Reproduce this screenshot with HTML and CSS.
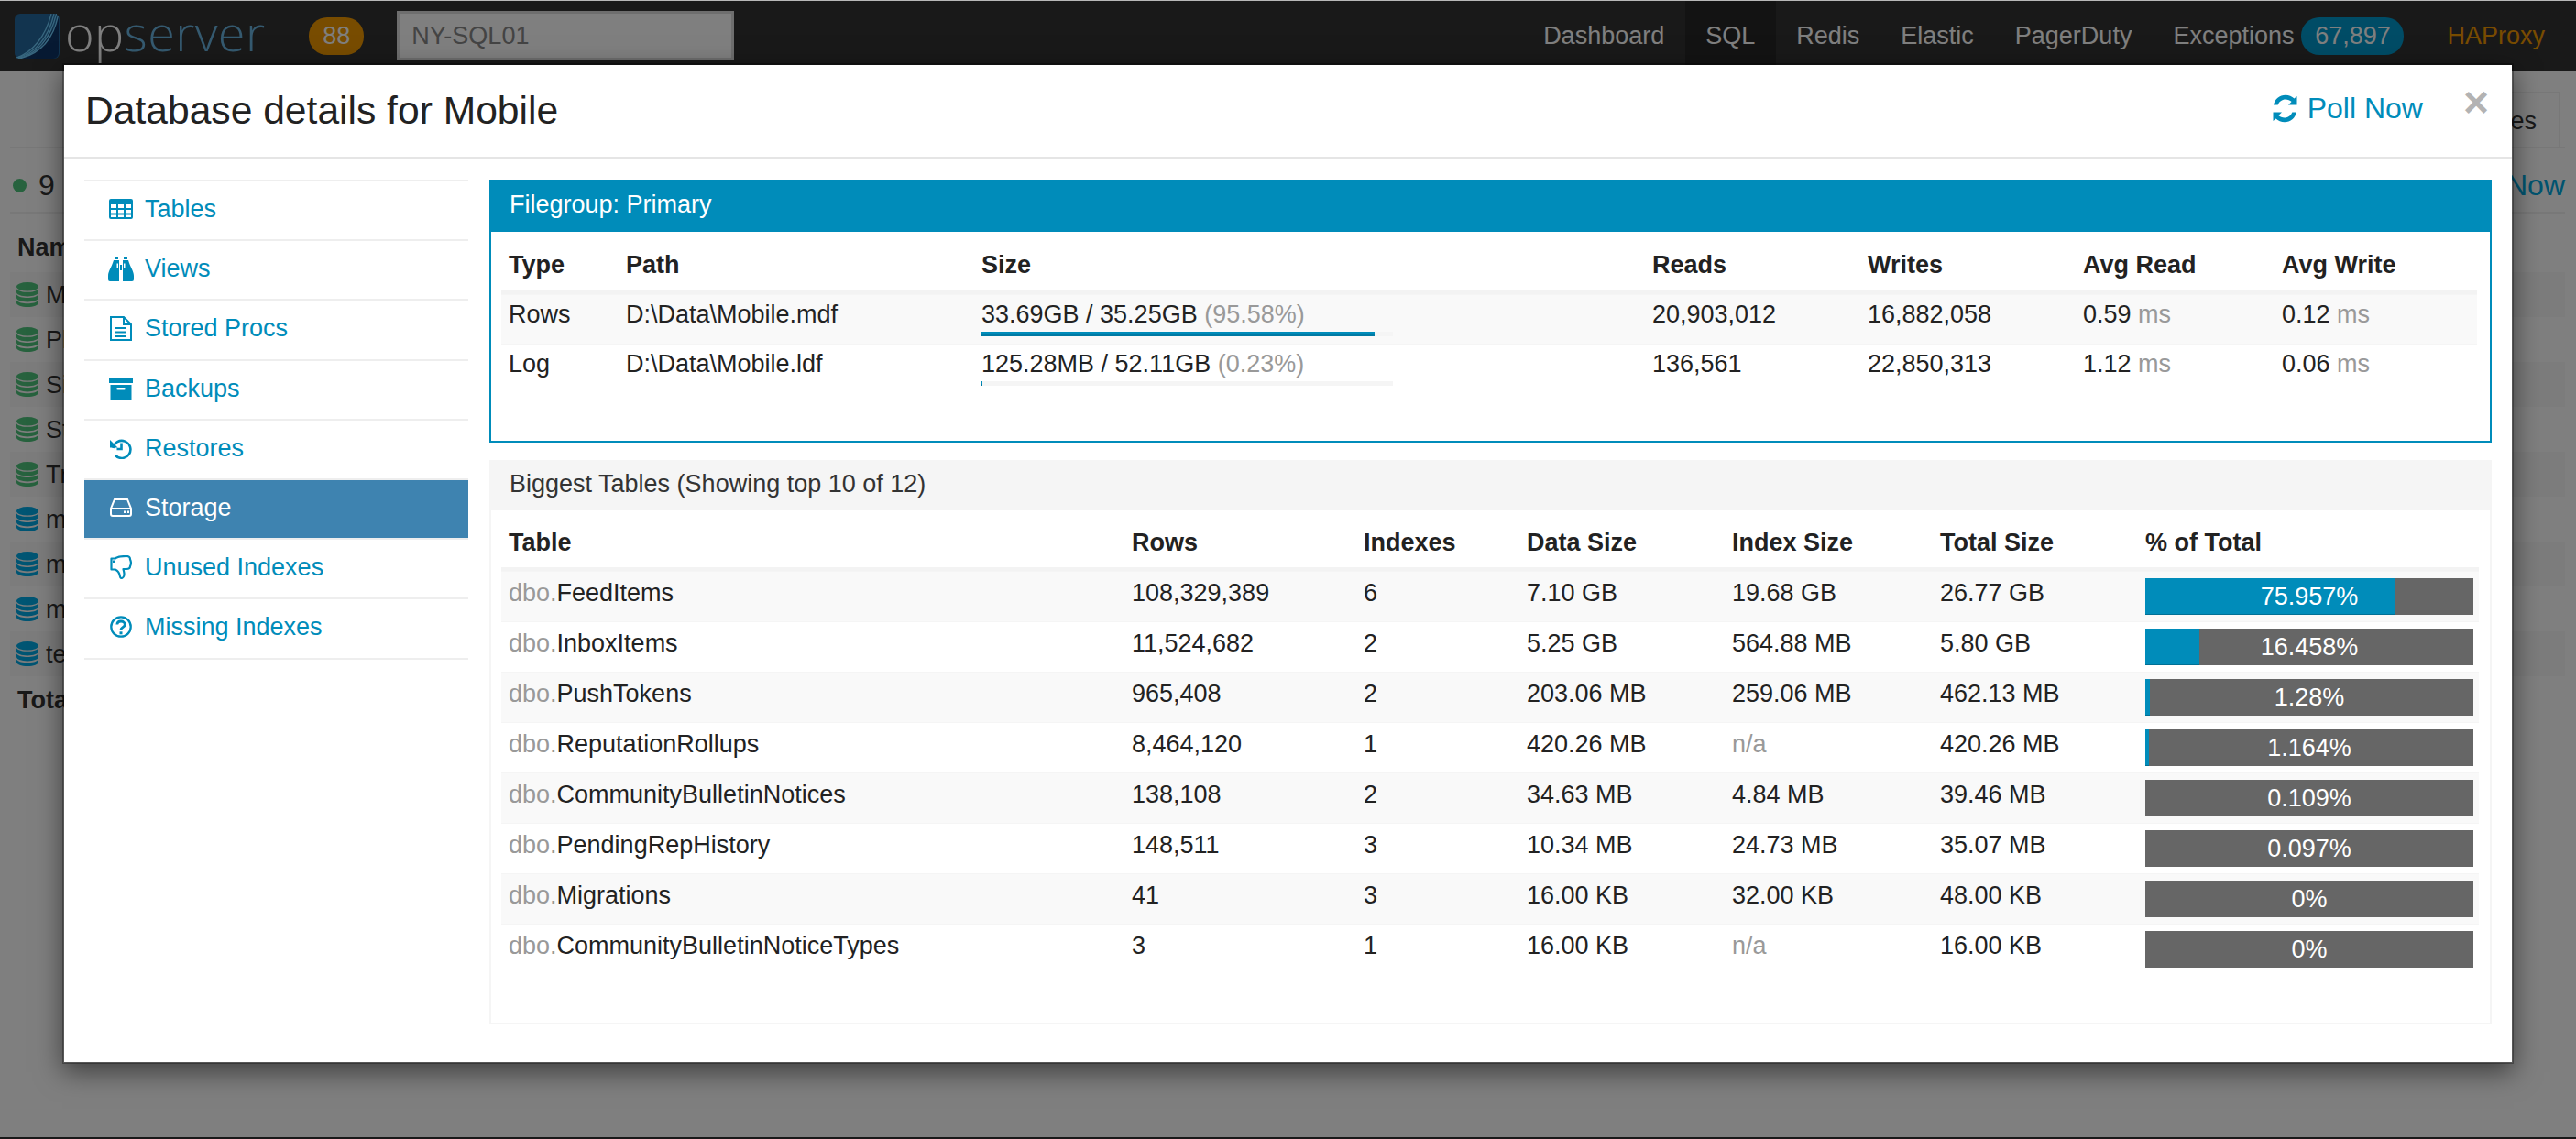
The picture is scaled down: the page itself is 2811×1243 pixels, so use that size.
FILE: index.html
```html
<!DOCTYPE html>
<html lang="en">
<head>
<meta charset="utf-8">
<title>Opserver - SQL</title>
<link rel="stylesheet" href="styles.css">
</head>
<body>
<svg class="defs" width="0" height="0" aria-hidden="true">
  <symbol id="i-db" viewBox="0 0 24 27">
    <ellipse cx="12" cy="4.8" rx="12" ry="4.8" fill="currentColor"/>
    <path d="M0 7.200C2 9.800 7 10.800 12 10.800s10-1 12-3.600V11c0 2.400-5.400 4.400-12 4.400S0 13.400 0 11zM0 13.500C2 16 7 17 12 17s10-1 12-3.500v3.600c0 2.400-5.400 4.300-12 4.300S0 19.500 0 17.100zM0 19.700c2 2.500 7 3.500 12 3.500S22 22.200 24 19.700v2.800C24 24.900 18.600 27 12 27S0 24.900 0 22.500z" fill="currentColor"/>
  </symbol>
  <symbol id="i-table" viewBox="0 0 26 22">
    <path fill-rule="evenodd" fill="currentColor" d="M2 0h22a2 2 0 0 1 2 2v18a2 2 0 0 1-2 2H2a2 2 0 0 1-2-2V2a2 2 0 0 1 2-2zM2 6v4h6V6zm8 0v4h6V6zm8 0v4h6V6zM2 12v3.500h6V12zm8 0v3.500h6V12zm8 0v3.500h6V12zM2 17.500V20h6v-2.500zm8 0V20h6v-2.500zm8 0V20h6v-2.500z"/>
  </symbol>
  <symbol id="i-binoculars" viewBox="0 0 28 27">
    <path fill="currentColor" d="M7 0h4v3H7zM17 0h4v3h-4zM6 4h6v9h-1V7.500H9.500V13H12v14H2a2 2 0 0 1-2-2v-4C0 16 4 11 6 4zM16 4h6c2 7 6 12 6 17v4a2 2 0 0 1-2 2H16V13h2.500V7.500H17V13h-1zM13 9h2v6h-2z"/>
  </symbol>
  <symbol id="i-file" viewBox="0 0 24 27">
    <path fill="none" stroke="currentColor" stroke-width="2" d="M1 1h14l8 8v17H1zM15 1v8h8"/>
    <path fill="none" stroke="currentColor" stroke-width="2" d="M6 13h12M6 17.500h12M6 22h12"/>
  </symbol>
  <symbol id="i-archive" viewBox="0 0 26 24">
    <path fill-rule="evenodd" fill="currentColor" d="M0 0h26v6H0zM1.500 8h23v16h-23zM9.500 11a1.200 1.200 0 0 0 0 2.500h7a1.200 1.200 0 0 0 0-2.500z"/>
  </symbol>
  <symbol id="i-history" viewBox="0 0 24 24">
    <path fill="none" stroke="currentColor" stroke-width="2.600" d="M3.500 12a9.500 9.500 0 1 1 2.500 8M12.500 6.500v6.500H7.500"/>
    <path fill="currentColor" d="M0 3l8.500 8.500H0z"/>
  </symbol>
  <symbol id="i-hdd" viewBox="0 0 24 20">
    <path fill="none" stroke="currentColor" stroke-width="2" d="M5 1h14l4 10v6a2 2 0 0 1-2 2H3a2 2 0 0 1-2-2v-6zM1.500 11h21"/>
    <path fill="currentColor" d="M15 13.500h2.500V16H15zM19 13.500h2V16h-2z"/>
  </symbol>
  <symbol id="i-thumb" viewBox="0 0 24 26">
    <path fill="none" stroke="currentColor" stroke-width="2.200" stroke-linejoin="round" d="M1.500 3.500h4.500l1-.8C10 1 13 1 18 1c3 0 4 1.500 4 3.500 1 2 1 5.500 0 7.500 0 2-2 3-4 3h-3.500c.6 2.500 1 3.500 1 5.500 0 2.500-1.500 4.500-3 4.500-1.500 0-1.500-1.500-1.800-3-.4-2.500-3-5.500-5-6.500H1.500z"/>
    <path fill="currentColor" d="M3 5.500h2V8H3z"/>
  </symbol>
  <symbol id="i-question" viewBox="0 0 24 24">
    <circle cx="12" cy="12" r="10.700" fill="none" stroke="currentColor" stroke-width="2.300"/>
    <path fill="none" stroke="currentColor" stroke-width="2.800" d="M7.800 9.500C8 7 10 6 12 6c2.500 0 4.300 1.500 4.300 3.500 0 3-4.300 3.200-4.300 5.500v.8"/>
    <path fill="currentColor" d="M10.500 17.300h3v3h-3z"/>
  </symbol>
  <symbol id="i-refresh" viewBox="0 0 27 31">
    <path fill="currentColor" d="M26.500 2v9.500H17l3.600-3.600C19 6.500 16.500 5.500 14 5.500c-3.800 0-7 2.400-8.300 6H1C2.300 5.200 7.500.8 14 .8c3.700 0 7 1.400 9.500 3.700zM.5 29v-9.500H10l-3.600 3.600c1.600 1.400 4.100 2.400 6.600 2.400 3.800 0 7-2.400 8.300-6H26c-1.300 6.300-6.500 10.700-13 10.700-3.700 0-7-1.400-9.500-3.700z"/>
  </symbol>
</svg>

<header class="topbar">
  <a class="brand">
    <svg class="brand-mark" viewBox="0 0 49 49" aria-hidden="true">
      <rect width="49" height="49" rx="6" fill="#24689e"/>
      <path d="M1 49C24 44 41 26 48 1v42a6 6 0 0 1-6 6z" fill="#0e3466"/>
      <g fill="none" stroke="#70cefe" stroke-width="1.300">
        <path d="M2 48C20 42 34 24 40 0"/>
        <path d="M3 48C23 43 37 26 43 0"/>
        <path d="M4 48.500C25 44 39 27 45.500 0"/>
        <path d="M5 49C27 44 42 28 47.500 2"/>
      </g>
    </svg>
    <span class="brand-text"><span class="brand-op">op</span><span class="brand-server">server</span></span>
  </a>
  <span class="pill pill-warn">88</span>
  <input class="search" value="NY-SQL01" aria-label="Server">
  <nav class="topnav">
    <a class="topnav-item">Dashboard</a>
    <a class="topnav-item is-active">SQL</a>
    <a class="topnav-item">Redis</a>
    <a class="topnav-item">Elastic</a>
    <a class="topnav-item">PagerDuty</a>
    <a class="topnav-item has-pill">Exceptions <span class="pill pill-info">67,897</span></a>
    <a class="topnav-item is-warn">HAProxy</a>
  </nav>
</header>

<main class="page">
  <div class="tabs"><span class="tab">Databases</span></div>
  <div class="status">
    <span class="status-left"><span class="dot"></span>9 Databases</span>
    <a class="status-poll">Poll Now</a>
  </div>
  <div class="db-row db-head">Name</div>
  <div class="db-row is-odd"><svg class="db-icon ok"><use href="#i-db"/></svg>Mobile</div>
  <div class="db-row"><svg class="db-icon ok"><use href="#i-db"/></svg>Players</div>
  <div class="db-row is-odd"><svg class="db-icon ok"><use href="#i-db"/></svg>Sites</div>
  <div class="db-row"><svg class="db-icon ok"><use href="#i-db"/></svg>Stats</div>
  <div class="db-row is-odd"><svg class="db-icon ok"><use href="#i-db"/></svg>Tracking</div>
  <div class="db-row"><svg class="db-icon sys"><use href="#i-db"/></svg>master</div>
  <div class="db-row is-odd"><svg class="db-icon sys"><use href="#i-db"/></svg>model</div>
  <div class="db-row"><svg class="db-icon sys"><use href="#i-db"/></svg>msdb</div>
  <div class="db-row is-odd"><svg class="db-icon sys"><use href="#i-db"/></svg>tempdb</div>
  <div class="db-row db-total">Total</div>
</main>
<div class="page-foot"></div>

<div class="backdrop">
  <section class="modal">
    <div class="modal-head">
      <h2 class="modal-title">Database details for Mobile</h2>
      <a class="poll"><svg class="poll-icon"><use href="#i-refresh"/></svg>Poll Now</a>
      <span class="close">×</span>
    </div>
    <div class="modal-body">
      <ul class="side">
        <li class="side-item"><svg class="side-icon s-table"><use href="#i-table"/></svg>Tables</li>
        <li class="side-item"><svg class="side-icon s-bin"><use href="#i-binoculars"/></svg>Views</li>
        <li class="side-item"><svg class="side-icon s-file"><use href="#i-file"/></svg>Stored Procs</li>
        <li class="side-item"><svg class="side-icon s-arch"><use href="#i-archive"/></svg>Backups</li>
        <li class="side-item"><svg class="side-icon s-hist"><use href="#i-history"/></svg>Restores</li>
        <li class="side-item is-active"><svg class="side-icon s-hdd"><use href="#i-hdd"/></svg>Storage</li>
        <li class="side-item"><svg class="side-icon s-thumb"><use href="#i-thumb"/></svg>Unused Indexes</li>
        <li class="side-item"><svg class="side-icon s-q"><use href="#i-question"/></svg>Missing Indexes</li>
      </ul>
      <div class="content">
        <div class="panel panel-primary">
          <div class="panel-head">Filegroup: Primary</div>
          <div class="panel-body files-body">
            <table class="grid files">
              <thead>
                <tr><th class="f1">Type</th><th class="f2">Path</th><th class="f3">Size</th><th class="f4">Reads</th><th class="f5">Writes</th><th class="f6">Avg Read</th><th class="f7">Avg Write</th></tr>
              </thead>
              <tbody>
                <tr>
                  <td>Rows</td><td>D:\Data\Mobile.mdf</td>
                  <td>33.69GB / 35.25GB <span class="muted">(95.58%)</span>
                    <div class="meter"><div class="meter-fill" style="width:95.58%"></div></div></td>
                  <td>20,903,012</td><td>16,882,058</td><td>0.59 <span class="muted">ms</span></td><td>0.12 <span class="muted">ms</span></td>
                </tr>
                <tr>
                  <td>Log</td><td>D:\Data\Mobile.ldf</td>
                  <td>125.28MB / 52.11GB <span class="muted">(0.23%)</span>
                    <div class="meter"><div class="meter-fill" style="width:0.23%"></div></div></td>
                  <td>136,561</td><td>22,850,313</td><td>1.12 <span class="muted">ms</span></td><td>0.06 <span class="muted">ms</span></td>
                </tr>
              </tbody>
            </table>
          </div>
        </div>
        <div class="panel panel-plain">
          <div class="panel-head">Biggest Tables (Showing top 10 of 12)</div>
          <div class="panel-body tables-body">
            <table class="grid tables">
              <thead>
                <tr><th class="t1">Table</th><th class="t2">Rows</th><th class="t3">Indexes</th><th class="t4">Data Size</th><th class="t5">Index Size</th><th class="t6">Total Size</th><th class="t7">% of Total</th></tr>
              </thead>
              <tbody>
                <tr><td><span class="muted">dbo.</span>FeedItems</td><td>108,329,389</td><td>6</td><td>7.10 GB</td><td>19.68 GB</td><td>26.77 GB</td><td class="bar-cell"><div class="bar"><div class="bar-fill" style="width:75.957%"></div><span class="bar-text">75.957%</span></div></td></tr>
                <tr><td><span class="muted">dbo.</span>InboxItems</td><td>11,524,682</td><td>2</td><td>5.25 GB</td><td>564.88 MB</td><td>5.80 GB</td><td class="bar-cell"><div class="bar"><div class="bar-fill" style="width:16.458%"></div><span class="bar-text">16.458%</span></div></td></tr>
                <tr><td><span class="muted">dbo.</span>PushTokens</td><td>965,408</td><td>2</td><td>203.06 MB</td><td>259.06 MB</td><td>462.13 MB</td><td class="bar-cell"><div class="bar"><div class="bar-fill" style="width:1.28%"></div><span class="bar-text">1.28%</span></div></td></tr>
                <tr><td><span class="muted">dbo.</span>ReputationRollups</td><td>8,464,120</td><td>1</td><td>420.26 MB</td><td><span class="muted">n/a</span></td><td>420.26 MB</td><td class="bar-cell"><div class="bar"><div class="bar-fill" style="width:1.164%"></div><span class="bar-text">1.164%</span></div></td></tr>
                <tr><td><span class="muted">dbo.</span>CommunityBulletinNotices</td><td>138,108</td><td>2</td><td>34.63 MB</td><td>4.84 MB</td><td>39.46 MB</td><td class="bar-cell"><div class="bar"><span class="bar-text">0.109%</span></div></td></tr>
                <tr><td><span class="muted">dbo.</span>PendingRepHistory</td><td>148,511</td><td>3</td><td>10.34 MB</td><td>24.73 MB</td><td>35.07 MB</td><td class="bar-cell"><div class="bar"><span class="bar-text">0.097%</span></div></td></tr>
                <tr><td><span class="muted">dbo.</span>Migrations</td><td>41</td><td>3</td><td>16.00 KB</td><td>32.00 KB</td><td>48.00 KB</td><td class="bar-cell"><div class="bar"><span class="bar-text">0%</span></div></td></tr>
                <tr><td><span class="muted">dbo.</span>CommunityBulletinNoticeTypes</td><td>3</td><td>1</td><td>16.00 KB</td><td><span class="muted">n/a</span></td><td>16.00 KB</td><td class="bar-cell"><div class="bar"><span class="bar-text">0%</span></div></td></tr>
              </tbody>
            </table>
          </div>
        </div>
      </div>
    </div>
  </section>
</div>
</body>
</html>
```

FILE: styles.css
```css
* { box-sizing: border-box; }
html, body { margin: 0; height: 100%; }
body {
  position: relative;
  display: flex;
  flex-direction: column;
  overflow: hidden;
  background: #fff;
  color: #333;
  font: 27px/36px "Liberation Sans", Arial, sans-serif;
}
.defs { position: absolute; }

/* top bar */
.topbar {
  flex: none;
  display: flex;
  align-items: center;
  height: 78px;
  padding: 0 0 0 16px;
  background: #333;
}
.brand { display: flex; align-items: center; }
.brand-mark { width: 49px; height: 49px; }
.brand-text {
  margin-left: 6px;
  font: 300 54px/60px "Open Sans", sans-serif;
  letter-spacing: 0.4px;
  position: relative;
  top: -4px;
}
.brand-op { color: #fff; }
.brand-server { color: #6ab4e0; }
.pill {
  display: inline-block;
  height: 41px;
  border-radius: 20px;
  color: #fff;
  line-height: 41px;
  text-align: center;
}
.pill-warn { width: 60px; margin-left: 48px; background: #f09800; }
.pill-info { width: 112px; margin-left: 8px; background: #0099cc; }
.search {
  width: 368px;
  height: 54px;
  margin-left: 36px;
  padding: 0 13px;
  border: 3px solid #ddd;
  background: #fff;
  color: #888;
  font: inherit;
}
.topnav { display: flex; align-items: stretch; height: 100%; margin-left: auto; }
.topnav-item {
  display: flex;
  align-items: center;
  padding: 0 22.500px;
  color: #fff;
  white-space: nowrap;
}
.topnav-item.is-active { background: #272727; }
.topnav-item.has-pill { padding-right: 47px; }
.topnav-item.is-warn { padding: 0 34px 0 0; color: #f09800; }

/* dimmed page */
.page { flex: 1; padding: 22px 12px 0 11px; }
.tabs { display: flex; justify-content: flex-end; border-bottom: 2px solid #f0f0f0; padding-right: 5px; }
.tab {
  height: 60px;
  padding: 0 24px;
  border: 2px solid #f0f0f0;
  border-bottom: 0;
  line-height: 60px;
}
.status {
  display: flex;
  justify-content: space-between;
  align-items: center;
  height: 71px;
  padding: 10px 0 0 3px;
  border-bottom: 2px solid #f0f0f0;
  font-size: 32px;
}
.status-left { display: flex; align-items: center; }
.dot { width: 15px; height: 15px; margin: 2px 13px 0 0; border-radius: 50%; background: #4fc47d; }
.status-poll { color: #00a8e0; }
.db-row { display: flex; align-items: center; height: 49px; padding-left: 7px; }
.db-head { height: 64px; padding: 10px 0 0 8px; font-weight: bold; }
.db-total { height: 50px; padding: 2px 0 0 8px; font-weight: bold; }
.db-row.is-odd { background: #f8f8f8; }
.db-icon { width: 24px; height: 27px; margin-right: 8px; }
.db-icon.ok { color: #4fc47d; }
.db-icon.sys { color: #00aae6; }
.page-foot { flex: none; height: 2px; background: #333; }

/* backdrop and modal */
.backdrop {
  position: absolute;
  inset: 1px 0 0;
  background: rgba(0, 0, 0, 0.5);
  box-shadow: 0 -1px 0 #b8b8b8;
}
.modal {
  position: absolute;
  top: 68px;
  left: 68px;
  width: 2675px;
  border: 2px solid rgba(0, 0, 0, 0.3);
  background: #fff;
  background-clip: padding-box;
  box-shadow: 0 9px 27px rgba(0, 0, 0, 0.5);
}
.modal-head {
  display: flex;
  align-items: center;
  height: 102px;
  padding: 0 25px 0 23px;
  border-bottom: 2px solid #e5e5e5;
}
.modal-title {
  margin: -2px auto 0 0;
  color: #222;
  font-size: 42.600px;
  font-weight: 400;
  line-height: 1.1;
}
.poll {
  display: flex;
  align-items: center;
  color: #008cba;
  font-size: 32px;
  margin-top: -6px;
}
.poll-icon { width: 27px; height: 31px; margin-right: 11px; }
.close {
  margin: -18px 0 0 44px;
  color: #b3b3b3;
  font-size: 48px;
  font-weight: bold;
  line-height: 1;
}
.modal-body {
  display: flex;
  align-items: flex-start;
  padding: 23px 22px 41px 22px;
}

/* side nav */
.side {
  flex: none;
  width: 419px;
  margin: 0 23px 0 0;
  padding: 0;
  list-style: none;
  border-bottom: 2px solid #eee;
}
.side-item {
  display: flex;
  align-items: center;
  height: 65.200px;
  padding: 0 0 3px 27px;
  border-top: 2px solid #eee;
  color: #008cba;
}
.side-item.is-active { background: #3e83b0; background-clip: padding-box; color: #fff; }
.side-icon { flex: none; margin-right: 13px; }
.s-table { width: 26px; height: 22px; }
.s-bin { width: 28px; height: 27px; margin-right: 12px; margin-left: -1px; }
.s-file { width: 24px; height: 27px; margin-left: 1px; margin-right: 14px; }
.s-arch { width: 26px; height: 24px; }
.s-hist { width: 24px; height: 24px; margin-left: 1px; margin-right: 14px; }
.s-hdd { width: 24px; height: 20px; margin-left: 1px; margin-right: 14px; }
.s-thumb { width: 24px; height: 26px; margin-left: 1px; margin-right: 14px; }
.s-q { width: 24px; height: 24px; margin-left: 1px; margin-right: 14px; }

/* panels */
.content { flex: 1; min-width: 0; }
.panel { border: 2px solid; }
.panel-head { height: 55px; padding: 0 20px; line-height: 53px; }
.panel-primary { height: 287px; margin-bottom: 19px; border-color: #008cba; }
.panel-primary .panel-head { margin: -2px -2px 0; height: 57px; background: #008cba; color: #fff; line-height: 54px; padding-left: 22px; }
.panel-plain { height: 616px; border-color: #f5f5f5; }
.panel-plain .panel-head { margin: -2px -2px 0; background: #f5f5f5; padding-left: 22px; }
.files-body { padding: 11px 14px 0 11px; }
.tables-body { padding: 0 12px 0 11px; }

/* tables */
.grid { width: 100%; border-collapse: separate; border-spacing: 0; table-layout: fixed; color: #222; }
.grid th {
  height: 57px;
  padding: 0 8px 3px;
  border-bottom: 4px solid #f3f3f3;
  font-weight: bold;
  text-align: left;
  vertical-align: middle;
}
.tables th { height: 66px; padding: 8px 8px 0; }
.grid td { padding: 3px 8px 0; vertical-align: top; white-space: nowrap; border-top: 1px solid #f5f5f5; }
.tables td { padding-top: 5px; }
.grid tbody tr:nth-child(odd) { background: #f9f9f9; }
.muted { color: #999; }
.f1 { width: 128px; } .f2 { width: 388px; } .f3 { width: 732px; } .f4 { width: 235px; } .f5 { width: 235px; } .f6 { width: 217px; } .f7 { width: auto; }
.t1 { width: 680px; } .t2 { width: 253px; } .t3 { width: 178px; } .t4 { width: 224px; } .t5 { width: 227px; } .t6 { width: 224px; } .t7 { width: auto; }
.meter { width: 449px; height: 5px; margin: 1px 0 8px; background: #f5f5f5; }
.meter-fill { height: 100%; background: #008cba; border-bottom: 2px solid #007aa3; }
.grid .bar-cell { padding: 7px 6px 7px 8px; }
.bar { position: relative; height: 40px; background: #666; }
.bar-fill { height: 100%; background: #008cba; border-bottom: 1.500px solid #007095; }
.bar-text {
  position: absolute;
  inset: 0;
  color: #fff;
  line-height: 40px;
  text-align: center;
}
```
